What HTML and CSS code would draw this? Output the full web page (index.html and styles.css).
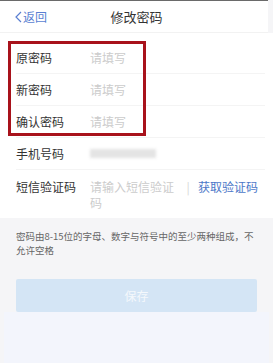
FILE: index.html
```html
<!DOCTYPE html>
<html>
    <head>
        <title>修改密码</title>
        <meta charset="utf-8"/>
        <link rel="stylesheet" href="styles.css">
    </head>
    <body>
        <div class="page">
            <div class="header">
                <a class="back" href="#">
                    <svg width="7" height="12" viewBox="0 0 7 12"><polyline points="6,1 1,6 6,11" fill="none" stroke="#5a7fd2" stroke-width="1.2"/></svg>
                    返回
                </a>
                <div class="title">修改密码</div>
            </div>

            <div class="form">
                <div class="mark"></div>
                <div class="row">
                    <div class="label">原密码</div>
                    <div class="hint">请填写</div>
                </div>
                <div class="row">
                    <div class="label">新密码</div>
                    <div class="hint">请填写</div>
                </div>
                <div class="row">
                    <div class="label">确认密码</div>
                    <div class="hint">请填写</div>
                </div>
                <div class="row">
                    <div class="label">手机号码</div>
                    <div class="phone"></div>
                </div>
                <div class="row sms">
                    <div class="label">短信验证码</div>
                    <div class="hint code">请输入短信验证码</div>
                    <div class="bar">|</div>
                    <a class="getcode" href="#">获取验证码</a>
                </div>
            </div>

            <div class="bottom">
                <p class="notice">密码由8-15位的字母、数字与符号中的至少两种组成，不允许空格</p>
                <div class="save">保存</div>
                <div class="rest"></div>
            </div>
        </div>
    </body>
</html>
```

FILE: styles.css
```css
body {
  margin: 0;
  font-family: "Noto Sans CJK SC", "Noto Sans", sans-serif;
  background: #ffffff;
}
.page {
  width: 273px;
  height: 363px;
  position: relative;
  overflow: hidden;
  background: #f5f5f7;
}
.header {
  height: 31px;
  border-top: 1px solid #6a6a6a;
  border-bottom: 1px solid #f2f2f2;
  width: 268px;
  display: flex;
  align-items: center;
  position: relative;
  background: #fff;
}
.back {
  display: flex;
  align-items: center;
  gap: 1px;
  margin-left: 15px;
  font-size: 12px;
  color: #5a7fd2;
  text-decoration: none;
}
.title {
  position: absolute;
  left: 0;
  right: -5px;
  text-align: center;
  font-size: 13px;
  color: #333;
}
.form {
  padding-top: 9px;
  position: relative;
  background: #fff;
}
.mark {
  position: absolute;
  left: 8px;
  top: 8px;
  width: 132px;
  height: 89px;
  border: 3px solid #a8121b;
}
.row {
  height: 32px;
  margin-left: 16px;
  margin-right: 8px;
  display: flex;
  align-items: center;
  border-bottom: 1px solid #f4f4f4;
  box-sizing: border-box;
}
.label {
  width: 74px;
  font-size: 12px;
  color: #333;
}
.hint {
  font-size: 12px;
  color: #cccccc;
}
.phone {
  width: 66px;
  height: 9px;
  background: #e4e4e4;
  filter: blur(1.5px);
}
.row.sms {
  height: 48px;
  align-items: flex-start;
  padding-top: 9px;
  border-bottom: none;
  line-height: 16px;
}
.code {
  width: 88px;
}
.bar {
  font-size: 12px;
  color: #d6d6d6;
  width: 20px;
  text-align: center;
}
.getcode {
  font-size: 12px;
  color: #4d78c8;
  text-decoration: none;
}
.bottom {
  padding: 11px 16px 0 16px;
}
.notice {
  margin: 0;
  font-size: 9.5px;
  line-height: 14px;
  color: #666;
}
.save {
  margin-top: 22px;
  height: 33px;
  border-radius: 2px;
  background: #d4e5f5;
  color: #f4f8fc;
  font-size: 12px;
  display: flex;
  align-items: center;
  justify-content: center;
}
.rest {
  height: 60px;
  margin: 0 -12px;
  background: #f3f5fc;
}
```
